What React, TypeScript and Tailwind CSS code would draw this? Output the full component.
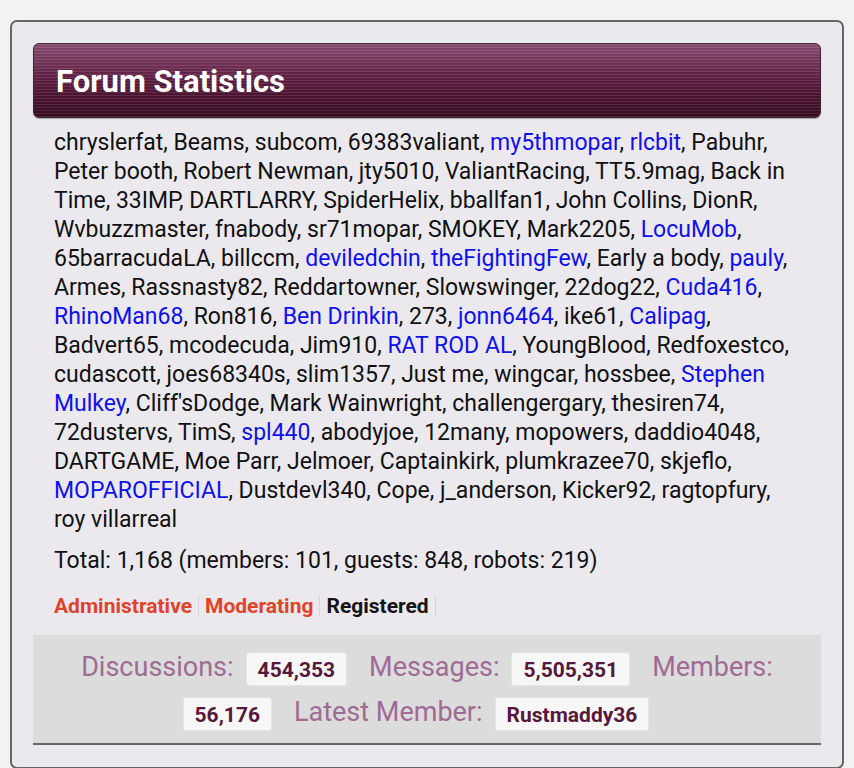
import React from "react";

type Item = { n: string; l?: boolean };

const users: Item[] = [
  { n: "chryslerfat" }, { n: "Beams" }, { n: "subcom" }, { n: "69383valiant" },
  { n: "my5thmopar", l: true }, { n: "rlcbit", l: true }, { n: "Pabuhr" },
  { n: "Peter booth" }, { n: "Robert Newman" }, { n: "jty5010" }, { n: "ValiantRacing" },
  { n: "TT5.9mag" }, { n: "Back in Time" }, { n: "33IMP" }, { n: "DARTLARRY" },
  { n: "SpiderHelix" }, { n: "bballfan1" }, { n: "John Collins" }, { n: "DionR" },
  { n: "Wvbuzzmaster" }, { n: "fnabody" }, { n: "sr71mopar" }, { n: "SMOKEY" },
  { n: "Mark2205" }, { n: "LocuMob", l: true }, { n: "65barracudaLA" }, { n: "billccm" },
  { n: "deviledchin", l: true }, { n: "theFightingFew", l: true }, { n: "Early a body" },
  { n: "pauly", l: true }, { n: "Armes" }, { n: "Rassnasty82" }, { n: "Reddartowner" },
  { n: "Slowswinger" }, { n: "22dog22" }, { n: "Cuda416", l: true }, { n: "RhinoMan68", l: true },
  { n: "Ron816" }, { n: "Ben Drinkin", l: true }, { n: "273" }, { n: "jonn6464", l: true },
  { n: "ike61" }, { n: "Calipag", l: true }, { n: "Badvert65" }, { n: "mcodecuda" },
  { n: "Jim910" }, { n: "RAT ROD AL", l: true }, { n: "YoungBlood" }, { n: "Redfoxestco" },
  { n: "cudascott" }, { n: "joes68340s" }, { n: "slim1357" }, { n: "Just me" },
  { n: "wingcar" }, { n: "hossbee" }, { n: "Stephen Mulkey", l: true }, { n: "Cliff'sDodge" },
  { n: "Mark Wainwright" }, { n: "challengergary" }, { n: "thesiren74" }, { n: "72dustervs" },
  { n: "TimS" }, { n: "spl440", l: true }, { n: "abodyjoe" }, { n: "12many" },
  { n: "mopowers" }, { n: "daddio4048" }, { n: "DARTGAME" }, { n: "Moe Parr" },
  { n: "Jelmoer" }, { n: "Captainkirk" }, { n: "plumkrazee70" }, { n: "skjeflo" },
  { n: "MOPAROFFICIAL", l: true }, { n: "Dustdevl340" }, { n: "Cope" }, { n: "j_anderson" },
  { n: "Kicker92" }, { n: "ragtopfury" }, { n: "roy villarreal" },
];

function Badge({ children }: { children: React.ReactNode }) {
  return (
    <span className="inline-block bg-[#f7f7f8] rounded-[3px] px-[11px] h-[34px] leading-[34px] align-middle text-[21px] font-bold text-[#56183a] border border-[#e4e4e6] mr-[22px]">
      {children}
    </span>
  );
}

export default function App() {
  return (
    <div className="min-h-[768px] bg-[#f2f2f2] pt-[20px] px-[10px] font-['Roboto',sans-serif]">
      <div className="border-2 border-[#666] rounded-[7px] bg-[#ebe9ee] px-[21px] pt-[21px] pb-[22px]">
        <div className="rounded-[6px] border border-[#3a2a33] h-[75px] flex items-center pl-[22px] [background-image:repeating-linear-gradient(to_bottom,rgba(255,255,255,0.10)_0px,rgba(255,255,255,0.10)_1px,rgba(0,0,0,0.08)_1px,rgba(0,0,0,0.08)_2px,transparent_2px,transparent_3px),linear-gradient(to_bottom,#8c4e74,#5e1d40_50%,#360a20)] shadow-[0_1px_1px_rgba(0,0,0,0.3)]">
          <h2 className="text-white text-[31px] font-bold leading-none mt-[2px]">Forum Statistics</h2>
        </div>
        <div className="px-[21px] pt-[10px]">
          <p className="text-[23px] leading-[29px] text-[#111]">
            {users.map((u, i) => (
              <React.Fragment key={i}>
                {u.l ? <span className="text-[#1010e8]">{u.n}</span> : u.n}
                {i < users.length - 1 ? ", " : ""}
              </React.Fragment>
            ))}
          </p>
          <p className="text-[23px] leading-[29px] text-[#111] mt-[12px]">
            Total: 1,168 (members: 101, guests: 848, robots: 219)
          </p>
          <div className="flex items-center mt-[19px] text-[21px] font-bold leading-[24px]">
            <span className="text-[#e0432b]">Administrative</span>
            <span className="w-px h-[22px] bg-[#d6d4d8] mx-[6px]" />
            <span className="text-[#e0432b]">Moderating</span>
            <span className="w-px h-[22px] bg-[#d6d4d8] mx-[6px]" />
            <span className="text-[#151515]">Registered</span>
            <span className="w-px h-[22px] bg-[#d6d4d8] mx-[6px]" />
          </div>
        </div>
        <div className="mt-[17px] bg-[#dcdcdc] border-b-2 border-[#666] pt-[10px] pb-[8px] px-[30px] text-center text-[27px] leading-[45px] text-[#9f6b94]">
          <span className="mr-[12px]">Discussions:</span>
          <Badge>454,353</Badge>
          <span className="mr-[12px]">Messages:</span>
          <Badge>5,505,351</Badge>
          <span>Members:</span>{" "}
          <Badge>56,176</Badge>
          <span className="mr-[12px]">Latest Member:</span>
          <Badge>Rustmaddy36</Badge>
        </div>
      </div>
    </div>
  );
}
